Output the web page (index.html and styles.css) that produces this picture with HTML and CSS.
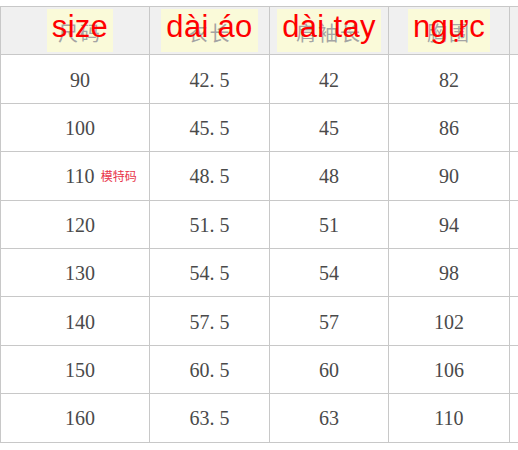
FILE: index.html
```html
<!DOCTYPE html>
<html lang="zh">
<head>
<meta charset="utf-8">
<title>尺码表</title>
<link rel="stylesheet" href="styles.css">
</head>
<body>
<table class="size-table">
  <colgroup>
    <col class="c1"><col class="c2"><col class="c3"><col class="c4"><col class="c5">
  </colgroup>
  <thead>
    <tr>
      <th class="first"><span class="label"><span class="zh">尺码</span><span class="vi">size</span></span></th>
      <th><span class="label"><span class="zh">衣长</span><span class="vi">dài áo</span></span></th>
      <th><span class="label"><span class="zh">肩袖长</span><span class="vi">dài tay</span></span></th>
      <th><span class="label"><span class="zh">胸围</span><span class="vi">ngực</span></span></th>
      <th></th>
    </tr>
  </thead>
  <tbody>
    <tr><td class="first">90</td><td>42<span class="dot">.</span>5</td><td>42</td><td>82</td><td></td></tr>
    <tr><td class="first">100</td><td>45<span class="dot">.</span>5</td><td>45</td><td>86</td><td></td></tr>
    <tr><td class="first"><span class="num">110<span class="tag">模特码</span></span></td><td>48<span class="dot">.</span>5</td><td>48</td><td>90</td><td></td></tr>
    <tr><td class="first">120</td><td>51<span class="dot">.</span>5</td><td>51</td><td>94</td><td></td></tr>
    <tr><td class="first">130</td><td>54<span class="dot">.</span>5</td><td>54</td><td>98</td><td></td></tr>
    <tr><td class="first">140</td><td>57<span class="dot">.</span>5</td><td>57</td><td>102</td><td></td></tr>
    <tr><td class="first">150</td><td>60<span class="dot">.</span>5</td><td>60</td><td>106</td><td></td></tr>
    <tr><td class="first">160</td><td>63<span class="dot">.</span>5</td><td>63</td><td>110</td><td></td></tr>
  </tbody>
</table>
</body>
</html>
```

FILE: styles.css
```css
html, body {
  margin: 0;
  padding: 0;
  background: #ffffff;
  overflow: hidden;
}

body {
  padding-top: 6px;
  font-family: "Liberation Serif", "Noto Sans CJK SC", serif;
}

.size-table {
  border-collapse: collapse;
  table-layout: fixed;
  width: 589px;
}

.c1 { width: 149px; }
.c2 { width: 120px; }
.c3 { width: 119px; }
.c4 { width: 121px; }
.c5 { width: 80px; }

.size-table th,
.size-table td {
  border: 1px solid #c8c8c8;
  height: 48.4px;
  padding: 0;
  text-align: center;
  vertical-align: middle;
  box-sizing: border-box;
}

.size-table th {
  background: #f0f0f0;
  font-weight: normal;
}

.size-table td {
  font-size: 20px;
  color: #4a4a4a;
  padding-top: 2px;
}

.size-table .first {
  padding-left: 10px;
}

.label {
  display: inline-block;
  position: relative;
  background: #fafad9;
  padding: 1px 5px 3px;
  line-height: 34px;
  vertical-align: middle;
}

.zh {
  position: absolute;
  left: 0;
  right: 0;
  top: 4px;
  bottom: 0;
  display: flex;
  align-items: center;
  justify-content: center;
  font-family: "Noto Sans CJK SC", sans-serif;
  font-size: 20px;
  letter-spacing: 2px;
  color: #a4a4a4;
}

.vi {
  position: relative;
  font-family: "Liberation Sans", Arial, sans-serif;
  font-size: 31px;
  letter-spacing: 0.3px;
  color: #ff0000;
}

.dot {
  margin-right: 0.25em;
}

.num {
  position: relative;
}

.tag {
  position: absolute;
  left: 100%;
  top: 50%;
  transform: translateY(-50%);
  margin-left: 6px;
  font-family: "Noto Sans CJK SC", sans-serif;
  font-size: 12px;
  line-height: 1;
  white-space: nowrap;
  color: #e8344a;
}
```
